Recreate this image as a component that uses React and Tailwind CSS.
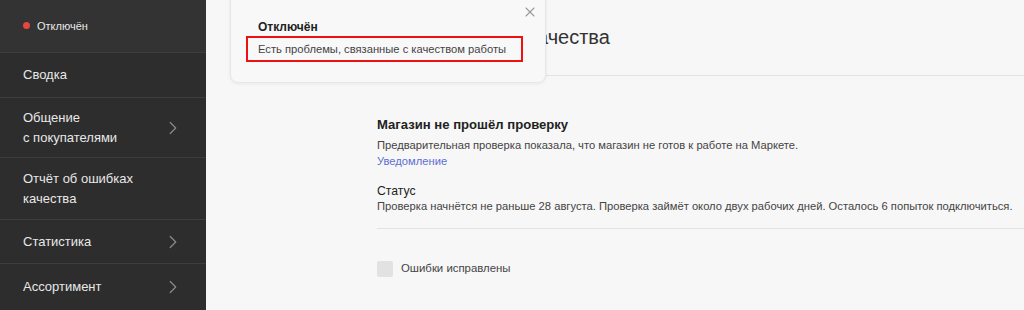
import { X, ChevronRight } from 'lucide-react';

const menu = [
  { label: ['Сводка'], h: 'h-[45px]' },
  { label: ['Общение', 'с покупателями'], h: 'h-[61px]', arrow: true },
  { label: ['Отчёт об ошибках', 'качества'], h: 'h-[62px]' },
  { label: ['Статистика'], h: 'h-[44px]', arrow: true },
  { label: ['Ассортимент'], h: 'h-[47px]', arrow: true },
];

export default function App() {
  return (
    <div className="flex h-[310px] w-[1024px] overflow-hidden bg-[#f7f7f7] font-['Liberation_Sans',Arial,sans-serif] text-[#333]">
      {/* Sidebar */}
      <aside className="flex w-[206px] shrink-0 flex-col bg-[#2d2d2d] text-[#e8e8e8]">
        <div className="flex h-[52px] items-center gap-[7px] bg-[#333333] pl-[23px] text-[11px]">
          <span className="h-[7px] w-[7px] rounded-full bg-[#e5473f]" />
          <span>Отключён</span>
        </div>
        {menu.map((item, i) => (
          <div
            key={i}
            className={`flex ${item.h} items-center justify-between border-t border-[#3d3d3d] pl-[23px] pr-[22px] text-[13px] leading-[20px] first:border-t-0`}
          >
            <div>
              {item.label.map((l) => (
                <div key={l}>{l}</div>
              ))}
            </div>
            {item.arrow && <ChevronRight size={22} strokeWidth={1.3} className="text-[#8a8a8a]" />}
          </div>
        ))}
      </aside>

      {/* Main */}
      <main className="relative flex-1 pl-[147px]">
        <div className="flex h-[76px] items-center border-b border-[#e3e3e3] pb-[1px]">
          <h1 className="text-[20px] font-normal text-[#333]">Отчёт об ошибках качества</h1>
        </div>

        <div className="pl-[24px] pt-[40px]">
          <div className="text-[13.1px] font-bold leading-[18px] text-[#222]">Магазин не прошёл проверку</div>
          <div className="mt-[3px] text-[11.2px] leading-[16px] text-[#444]">
            Предварительная проверка показала, что магазин не готов к работе на Маркете.
          </div>
          <div className="text-[11.2px] leading-[16px] text-[#5b6fd1]">Уведомление</div>
          <div className="mt-[14px] text-[12.2px] font-medium leading-[16px] text-[#222]">Статус</div>
          <div className="text-[11.2px] leading-[15px] text-[#444]">
            Проверка начнётся не раньше 28 августа. Проверка займёт около двух рабочих дней. Осталось 6 попыток подключиться.
          </div>
          <div className="mt-[14px] border-t border-[#e3e3e3]" />
          <label className="mt-[31px] flex items-center gap-[8px] text-[11.4px] text-[#444]">
            <span className="h-[16px] w-[16px] rounded-[2px] bg-[#e2e2e2]" />
            Ошибки исправлены
          </label>
        </div>

        {/* Popup */}
        <div className="absolute left-[24px] top-[-10px] w-[316px] rounded-[8px] border border-[#e6e6e6] bg-[#f8f8f8] pb-[20px] pl-[27px] pr-[12px] pt-[12px] shadow-[0_1px_4px_rgba(0,0,0,0.06)]">
          <button className="absolute right-[7px] top-[13px] text-[#999]">
            <X size={16} strokeWidth={1.6} />
          </button>
          <div className="pt-[16px] text-[12px] font-bold leading-[16px] text-[#222]">Отключён</div>
          <div className="-ml-[12px] mt-[1px] w-[277px] border-2 border-[#ee1111] px-[10px] py-[3px] text-[11.2px] leading-[16px] text-[#444]">
            Есть проблемы, связанные с качеством работы
          </div>
        </div>
      </main>
    </div>
  );
}
